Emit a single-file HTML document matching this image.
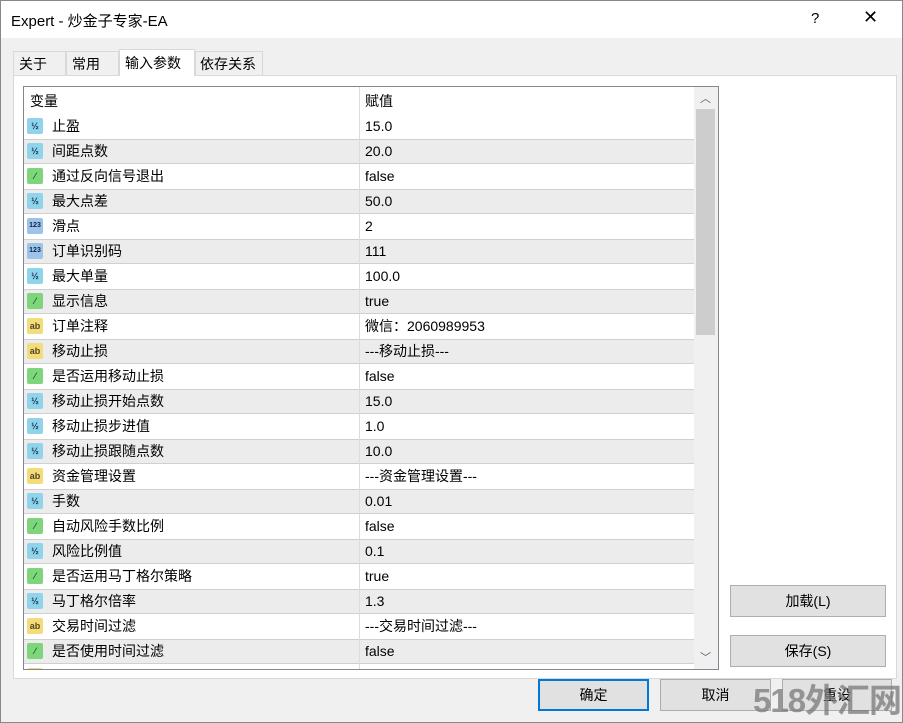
<!DOCTYPE html><html><head><meta charset="utf-8"><style>
html,body{margin:0;width:903px;height:723px;overflow:hidden}
body{background:#f0f0f0;font-family:"Liberation Sans","Noto Sans CJK SC",sans-serif;font-size:14px;color:#000;position:relative}
.win{position:absolute;left:0;top:0;width:901px;height:721px;border:1px solid #888;background:#f0f0f0;overflow:hidden}
.title{position:absolute;left:0;top:0;width:901px;height:37px;background:#fff}
.title span{position:absolute;left:10px;top:9px;font-size:15px}
.tab{position:absolute;top:50px;height:24px;border:1px solid #d9d9d9;border-bottom:none;background:#f0f0f0;font-size:14px;line-height:24px;padding-left:5px;box-sizing:border-box}
.panel{position:absolute;left:12px;top:74px;width:884px;height:604px;background:#fff;border:1px solid #d9d9d9;box-sizing:border-box}
.tbl{position:absolute;left:22px;top:85px;width:696px;height:584px;border:1px solid #828790;box-sizing:border-box;overflow:hidden;background:#fff}
.row{position:absolute;left:0;width:670px;height:25px;line-height:25px;box-sizing:border-box}
.row.g{background:#ececec;box-shadow:inset 0 1px 0 #d0d0d0,inset 0 -1px 0 #d0d0d0}
.row .n{position:absolute;left:28px}
.row .v{position:absolute;left:341px}
.row .d{position:absolute;left:335px;top:0;bottom:0;border-left:1px solid #dcdcdc}
.ic{position:absolute;left:3px;top:4px;width:16px;height:16px;border-radius:2px;font-size:9px;line-height:16px;text-align:center;font-weight:bold;font-family:"Liberation Sans",sans-serif}
.b{background:#8fd4ea;color:#135}
.gr{background:#7fd67a;color:#063}
.y{background:#f2dd7a;color:#542}
.n3{background:#9cc4ea;color:#124;font-size:7px}
.sb{position:absolute;left:670px;top:0;width:24px;height:582px;background:#f0f0f0}
.btn{position:absolute;height:32px;border:1px solid #adadad;background:#e1e1e1;box-sizing:border-box;text-align:center;line-height:30px;font-size:14px}
</style></head><body><div class="win">
<div class="title"><span>Expert - 炒金子专家-EA</span><span style="left:810px;top:9px">?</span><span style="left:862px;top:6px;font-size:18px">✕</span></div>
<div class="tab" style="left:12px;width:53px">关于</div>
<div class="tab" style="left:65px;width:53px">常用</div>
<div class="tab" style="left:118px;width:76px;top:48px;height:27px;background:#fff;z-index:2;line-height:26px">输入参数</div>
<div class="tab" style="left:194px;width:68px;padding-left:4px">依存关系</div>
<div class="panel"></div>
<div class="tbl">
<div class="row" style="top:0;height:27px;line-height:28px;background:#fff"><span class="n" style="left:6px">变量</span><span class="d"></span><span class="v">赋值</span></div>
<div id="rows"></div>
<div class="sb"><div style="position:absolute;left:2px;top:22px;width:19px;height:226px;background:#cdcdcd"></div><div style="position:absolute;left:6px;top:3px;font-size:11px;color:#606060">︿</div><div style="position:absolute;left:6px;top:562px;font-size:11px;color:#606060">﹀</div></div>
</div>
<div class="btn" style="left:729px;top:584px;width:156px">加载(L)</div>
<div class="btn" style="left:729px;top:634px;width:156px">保存(S)</div>
<div class="btn" style="left:537px;top:678px;width:111px;border:2px solid #0078d7;line-height:28px">确定</div>
<div class="btn" style="left:659px;top:678px;width:111px">取消</div>
<div class="btn" style="left:781px;top:678px;width:110px">重设</div>
<div style="position:absolute;left:752px;top:680px;font-size:33px;line-height:40px;font-weight:bold;color:rgba(120,120,120,.75);white-space:nowrap;letter-spacing:-1px">518外汇网</div>
</div>
<script>
var d=[["b","止盈","15.0"],["b","间距点数","20.0"],["gr","通过反向信号退出","false"],["b","最大点差","50.0"],["n3","滑点","2"],["n3","订单识别码","111"],["b","最大单量","100.0"],["gr","显示信息","true"],["y","订单注释","微信：2060989953"],["y","移动止损","---移动止损---"],["gr","是否运用移动止损","false"],["b","移动止损开始点数","15.0"],["b","移动止损步进值","1.0"],["b","移动止损跟随点数","10.0"],["y","资金管理设置","---资金管理设置---"],["b","手数","0.01"],["gr","自动风险手数比例","false"],["b","风险比例值","0.1"],["gr","是否运用马丁格尔策略","true"],["b","马丁格尔倍率","1.3"],["y","交易时间过滤","---交易时间过滤---"],["gr","是否使用时间过滤","false"],["y","",""]];
var t={b:"½",gr:"⁄",y:"ab",n3:"123"},h="";
d.forEach(function(r,i){h+='<div class="row'+(i%2?' g':'')+'" style="top:'+(27+i*25)+'px"><span class="ic '+r[0]+'">'+t[r[0]]+'</span><span class="n">'+r[1]+'</span><span class="d"></span><span class="v">'+r[2]+'</span></div>'});
document.getElementById("rows").innerHTML=h;
</script>
</body></html>
